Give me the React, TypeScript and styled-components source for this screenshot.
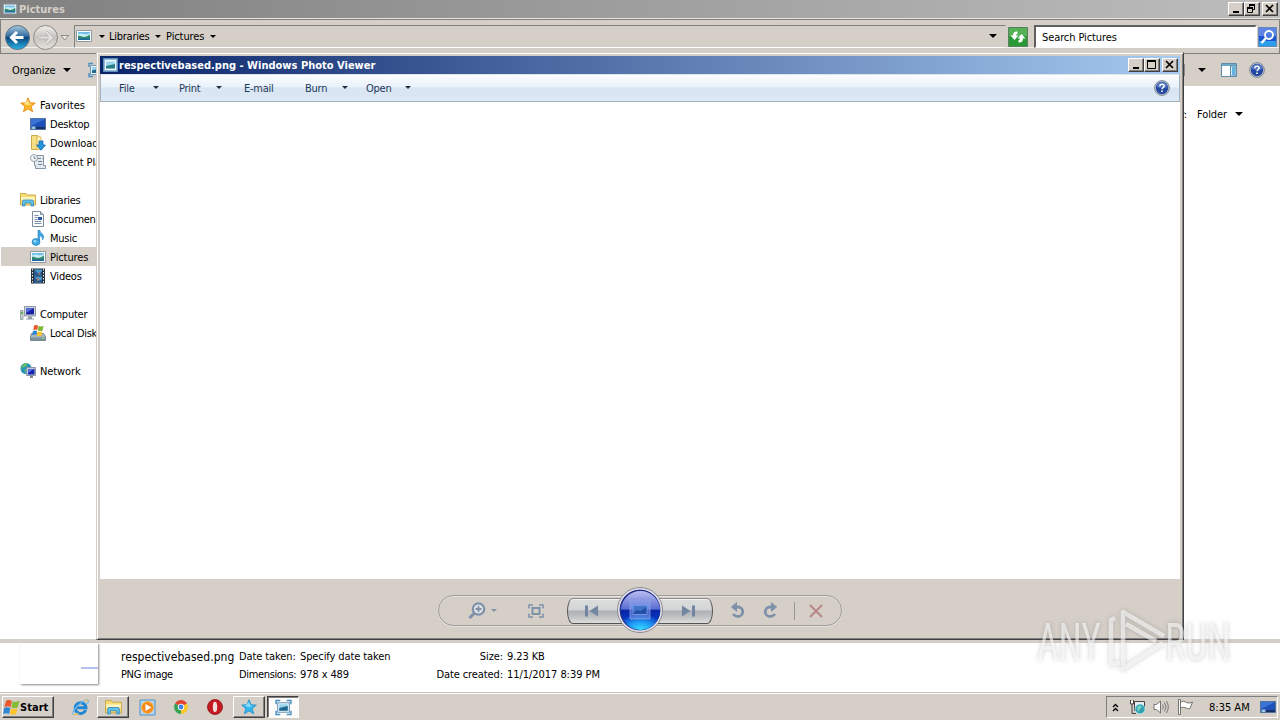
import React from "react";
import styled, { createGlobalStyle, css } from "styled-components";

const GlobalStyle = createGlobalStyle`
  * {
    box-sizing: border-box;
  }
  body {
    margin: 0;
    overflow: hidden;
    font-family: "DejaVu Sans Condensed", "DejaVu Sans", sans-serif;
    font-stretch: condensed;
    font-size: 11px;
    line-height: 14px;
    color: #000;
  }
  svg {
    display: block;
    flex: none;
  }
`;

const FACE = "#d5cfc8";

const Desktop = styled.div`
  position: relative;
  width: 1280px;
  height: 720px;
  display: flex;
  flex-direction: column;
  overflow: hidden;
  background: #fff;
`;

const Label = styled.span<{ $w?: number; $ls?: number; $bold?: boolean }>`
  display: block;
  flex: none;
  margin: 1px 0 -1px;
  white-space: pre;
  width: ${({ $w }) => ($w ? `${$w}px` : "auto")};
  letter-spacing: ${({ $ls = -0.1 }) => $ls}px;
  font-weight: ${({ $bold }) => ($bold ? 700 : 400)};
`;

const Arrow = styled.i<{ $c?: string; $s?: number }>`
  display: block;
  flex: none;
  width: 0;
  height: 0;
  border: ${({ $s = 4 }) => $s}px solid transparent;
  border-top-color: ${({ $c = "#000" }) => $c};
  border-bottom: 0;
`;

const Spacer = styled.div`
  flex: 1;
`;
const Gap = styled.div<{ $w: number }>`
  flex: none;
  width: ${({ $w }) => $w}px;
`;

/* ---- title bars ---- */
const TitleBar = styled.div<{ $active?: boolean }>`
  flex: none;
  display: flex;
  align-items: center;
  height: 18px;
  padding: 0 2px 0 3px;
  color: ${({ $active }) => ($active ? "#fff" : FACE)};
  background: ${({ $active }) =>
    $active
      ? "linear-gradient(90deg, #0a246a, #a6caf0)"
      : "linear-gradient(90deg, #808080, #bdbdbd)"};
`;
const Caption = styled.span`
  display: flex;
  align-items: center;
  justify-content: center;
  width: 16px;
  height: 14px;
  background: ${FACE};
  border: 1px solid;
  border-color: #fff #404040 #404040 #fff;
  box-shadow: inset -1px -1px #808080;
  &:last-child {
    margin-left: 2px;
  }
`;

/* ---- explorer ---- */
const NavBar = styled.div`
  flex: none;
  display: flex;
  align-items: center;
  height: 36px;
  padding: 1px 3px 0 4px;
  background: ${FACE};
  border-top: 1px solid #e8e5e0;
  border-bottom: 1px solid #808080;
  box-shadow: inset 1px 1px #808080, inset -1px 0 #808080, inset 0 -5px ${FACE}, inset 0 -6px #f3f1ee;
`;
const Address = styled.div`
  flex: none;
  display: flex;
  align-items: center;
  width: 932px;
  height: 23px;
  padding: 0 8px 1px 1px;
  border: 1px solid;
  border-color: #808080 ${FACE} #fff #808080;
`;
const Search = styled.div`
  flex: none;
  display: flex;
  align-items: center;
  width: 223px;
  height: 23px;
  padding-left: 6px;
  background: #fff;
  border: 2px solid;
  border-color: #606060 #fff #fff #606060;
  border-bottom-width: 1px;
`;
const CommandBar = styled.div`
  flex: none;
  display: flex;
  align-items: center;
  height: 32px;
  padding: 0 15px 0 12px;
  background: ${FACE};
`;
const ViewsEdge = styled.div`
  width: 4px;
  height: 12px;
  margin-right: 13px;
  background: #fff;
  border: 1px solid #8a8a90;
`;
const Body = styled.div`
  flex: 1;
  display: flex;
  justify-content: space-between;
  background: #fff;
`;
const Tree = styled.div`
  width: 200px;
  padding: 9px 0 0 1px;
`;
const TreeRow = styled.div<{ $level?: number; $selected?: boolean }>`
  display: flex;
  align-items: center;
  gap: 4px;
  height: 19px;
  padding-left: ${({ $level }) => ($level ? 29 : 19)}px;
  background: ${({ $selected }) => ($selected ? FACE : "transparent")};
`;
const Arrange = styled.div`
  display: flex;
  align-items: center;
  gap: 10px;
  height: 56px;
  padding-right: 37px;
`;
const Details = styled.div`
  flex: none;
  display: flex;
  height: 53px;
  padding: 0 0 0 20px;
  background: #fff;
  border-top: 4px solid ${FACE};
`;
const Thumb = styled.div`
  display: flex;
  justify-content: flex-end;
  width: 78px;
  height: 41px;
  margin-right: 1px;
  padding-top: 24px;
  background: #fff;
  box-shadow: 1px 1px 2px #888;
  &::after {
    content: "";
    width: 17px;
    height: 2px;
    background: #b4c2ec;
  }
`;
const Column = styled.div<{ $ml: number; $right?: boolean; $w?: number }>`
  margin-left: ${({ $ml }) => $ml}px;
  width: ${({ $w }) => ($w ? `${$w}px` : "auto")};
  padding-top: 4px;
  display: flex;
  flex-direction: column;
  align-items: ${({ $right }) => ($right ? "flex-end" : "flex-start")};
  line-height: 18px;
`;
const FileName = styled(Label)`
  font-size: 12px;
`;

/* ---- taskbar ---- */
const Taskbar = styled.div`
  flex: none;
  display: flex;
  align-items: center;
  height: 28px;
  padding: 1px 0 0 2px;
  background: ${FACE};
  border-top: 1px solid #c5c0ba;
  box-shadow: inset 0 1px #fff;
`;
const raised = css`
  border: 1px solid;
  border-color: #fff #404040 #404040 #fff;
  box-shadow: inset -1px -1px #808080;
`;
const Start = styled.div`
  display: flex;
  align-items: center;
  width: 52px;
  height: 22px;
  ${raised}
`;
const Task = styled.div<{ $state?: "open" | "active" }>`
  display: flex;
  align-items: center;
  justify-content: center;
  width: 32px;
  height: 22px;
  ${({ $state }) => $state === "open" && raised}
  ${({ $state }) =>
    $state === "active" &&
    css`
      background: #fdfcfb;
      border: 1px solid;
      border-color: #404040 #fff #fff #404040;
      box-shadow: inset 1px 1px #808080;
    `}
`;
const Tray = styled.div`
  display: flex;
  align-items: center;
  width: 172px;
  height: 22px;
  margin-right: 2px;
  padding-left: 5px;
  border: 1px solid;
  border-color: #808080 #fff #fff #808080;
`;

/* ---- photo viewer window ---- */
const Window = styled.div`
  position: absolute;
  left: 96px;
  top: 52px;
  width: 1088px;
  height: 588px;
  display: flex;
  flex-direction: column;
  padding: 3px 3px 0;
  background: ${FACE};
  border: 1px solid;
  border-color: ${FACE} #404040 #404040 ${FACE};
  box-shadow: inset 1px 1px #fff, inset -1px -1px #808080;
`;
const MenuBar = styled.div`
  flex: none;
  display: flex;
  align-items: center;
  height: 28px;
  padding: 0 9px 1px 18px;
  color: #1e395b;
  background: linear-gradient(#fcfdfe 0, #e9f1fa 45%, #d8e5f2 50%, #dce8f4 100%);
  border: 1px solid #a5b4c4;
  border-top-color: #dfe5ea;
`;
const Canvas = styled.div`
  flex: 1;
  background: #fff;
`;
const Controls = styled.div`
  flex: none;
  display: flex;
  align-items: center;
  justify-content: center;
  height: 60px;
  padding-top: 3px;
`;
const Capsule = styled.div`
  display: flex;
  align-items: center;
  width: 404px;
  height: 31px;
  border: 1px solid #a09e9c;
  border-radius: 16px;
  box-shadow: inset 0 1px #e6e3df, 0 1px #e6e3df;
`;
const Step = styled.div<{ $side: "left" | "right" }>`
  display: flex;
  align-items: center;
  justify-content: center;
  width: 55px;
  height: 26px;
  margin: ${({ $side }) => ($side === "left" ? "0 -5px 0 0" : "0 0 0 -5px")};
  padding: ${({ $side }) => ($side === "left" ? "0 6px 0 0" : "0 0 0 6px")};
  border: 1px solid #555;
  border-top-color: #8c8c8c;
  border-radius: ${({ $side }) =>
    $side === "left" ? "6px 0 0 6px / 13px 0 0 13px" : "0 6px 6px 0 / 0 13px 13px 0"};
  background: linear-gradient(#dcdddd 0, #d3d5d6 45%, #adb1b4 50%, #c0c2c3 75%, #dededd 100%);
  box-shadow: inset 0 1px #f0f0f0;
`;
const Play = styled.div`
  flex: none;
  z-index: 1;
  display: flex;
  align-items: center;
  justify-content: center;
  width: 46px;
  height: 46px;
  margin-bottom: 1px;
  border: 1px solid #8a8a94;
  border-radius: 50%;
  background: radial-gradient(circle, #23348c 0 20px, #e3dfea 20.8px);
`;
const Orb = styled.div`
  display: flex;
  align-items: center;
  justify-content: center;
  width: 39px;
  height: 39px;
  border-radius: 50%;
  background: radial-gradient(ellipse 24px 16px at 50% 100%, #39e1ff 0, #1f9df5 50%, transparent 100%),
    linear-gradient(#b9bdf0 0, #5a6ed2 46%, #0724a6 50%, #0a4ddc 100%);
`;
const Divider = styled.div`
  width: 1px;
  height: 18px;
  background: #96969a;
`;
const Watermark = styled.svg`
  position: absolute;
  left: 1030px;
  top: 600px;
  filter: drop-shadow(0 0 2px rgba(90, 90, 90, 0.5));
`;

/* ---- icons ---- */
const PictureIcon = ({ w = 16 }: { w?: number }) => (
  <svg width={w} height={w} viewBox="0 0 16 16">
    <path d="M.5 2.500h15v11H.5z" fill="#fff" stroke="#8b9aa3" />
    <path d="M2 4h12v8H2z" fill="#6fbfe8" />
    <path d="M2 6.500q3-1.500 6-.5t6-1V9H2z" fill="#c8ecf4" />
    <path d="M2 8c2-1 4 1 6 1s4-1 6-2.500V11H2z" fill="#2f8a66" />
    <path d="M2 10.500h12V12H2z" fill="#1c66a8" />
  </svg>
);

const ViewerIcon = ({ w = 16 }: { w?: number }) => (
  <svg width={w} height={w} viewBox="0 0 16 16">
    <path d="M2.500 3.500h11v9h-11z" fill="#eaf7fd" stroke="#6d98b8" />
    <path d="M4 5h8v6H4z" fill="#94d3ec" />
    <path d="M4 8.500q4-1 8-2V11H4z" fill="#22668c" />
    <path d="M1 5V1.500h4M11 1.500h4V5M15 11v3.500h-4M5 14.500H1V11" fill="none" stroke="#4a8fc0" strokeWidth="1.400" />
  </svg>
);

const ViewerTitleIcon = () => (
  <svg width="15" height="14" viewBox="0 0 15 14">
    <path d="M.5.5h14v13H.5z" fill="#8db8dc" stroke="#5e8fbd" />
    <path d="M2 2h11v10H2z" fill="#f2fafd" />
    <path d="M3 3.500h9v7H3z" fill="#9bd6ec" />
    <path d="M3 8q4-1 9-2v4.500H3z" fill="#2a7f86" />
  </svg>
);

const StarIcon = ({ blue, w = 16 }: { blue?: boolean; w?: number }) => (
  <svg width={w} height={w} viewBox="0 0 16 16">
    <path
      d="M8 .8l2.100 5 5.200.3-4.100 3.400 1.500 5.300L8 11.900l-4.600 2.900 1.400-5.300L.7 6.100l5.200-.3z"
      fill={blue ? "#35b7ee" : "#fbb829"}
      stroke={blue ? "#168dcc" : "#e08214"}
      strokeWidth=".8"
    />
    <path d="M8 3l1.300 3.600 2.700.3-4 1.100-4-1z" fill={blue ? "#8adcf8" : "#fee68a"} />
  </svg>
);

const MonitorIcon = ({ w = 16 }: { w?: number }) => (
  <svg width={w} height={w} viewBox="0 0 16 16">
    <path d="M.5 2.500h15v11H.5z" fill="#1d50b8" stroke="#54719c" />
    <path d="M1 3h14L1 10z" fill="#3a74d4" />
    <path d="M1 11h14v2H1z" fill="#173167" />
    <path d="M1.500 10.500h4v2.500h-4z" fill="#9cc6e8" />
  </svg>
);

const DownloadsIcon = () => (
  <svg width="16" height="16" viewBox="0 0 16 16">
    <path d="M1.500.5h6v14h-6z" fill="#f6de85" stroke="#d0aa45" />
    <path d="M7 1l4 1v12l-4 1z" fill="#fdf0b2" stroke="#d0aa45" strokeWidth=".7" />
    <path d="M9 6h4v4h2.500L11 15.300 6.500 10H9z" fill="#2695dc" stroke="#1464a8" strokeWidth=".8" />
  </svg>
);

const RecentIcon = () => (
  <svg width="16" height="16" viewBox="0 0 16 16">
    <path d="M4.500 1.500h9v10h2v3h-10v-3h-1z" fill="#e2eaf0" stroke="#8495a4" />
    <path d="M8 4.500h3M8 7.500h4M8 10.500h4M12.500 4.500h1" stroke="#6e8496" />
    <circle cx="4" cy="4" r="3.500" fill="#f4f7f9" stroke="#92a1ad" />
    <path d="M4 2v2.300h2" fill="none" stroke="#5e7484" strokeWidth=".8" />
  </svg>
);

const FolderIcon = ({ w = 16 }: { w?: number }) => (
  <svg width={w} height={w} viewBox="0 0 16 16">
    <path d="M.5 1.500H6l1 1.500h8.500v10H.5z" fill="#f5dc74" stroke="#c9a646" strokeWidth=".9" />
    <path d="M1 5h14v3H1z" fill="#fdf4bb" />
    <path d="M2.500 14V9.500q0-1.500 1.500-1.500h8q1.500 0 1.500 1.500V14H11v-3H5v3z" fill="#62c1ec" stroke="#3489bd" strokeWidth=".8" />
  </svg>
);

const DocumentIcon = () => (
  <svg width="16" height="16" viewBox="0 0 16 16">
    <path d="M2.500.5h8l3 3v12h-11z" fill="#fff" stroke="#7d8da0" />
    <path d="M10.500.5v3h3" fill="#cfdbe6" stroke="#7d8da0" />
    <path d="M4.500 4.500h4M4.500 6.500h3M4.500 8.500h3M4.500 10.500h7M4.500 12.500h7" stroke="#7a8fab" />
    <path d="M8 6h4v3H8z" fill="#2b5aa4" />
  </svg>
);

const MusicIcon = () => (
  <svg width="16" height="16" viewBox="0 0 16 16">
    <path d="M8 0h1.600c.3 3 4.600 3.500 4 7.500-.1 1.500-.9 2.300-1.300 2.500.6-2.600-.6-3.500-2.700-4.500V12H8z" fill="#3ba6e2" stroke="#1d76b8" strokeWidth=".5" />
    <ellipse cx="6" cy="12" rx="4" ry="3.400" fill="#41abe5" stroke="#1d76b8" strokeWidth=".6" />
    <ellipse cx="5" cy="11.200" rx="1.500" ry="1" fill="#b3e2f8" />
  </svg>
);

const VideoIcon = () => (
  <svg width="16" height="16" viewBox="0 0 16 16">
    <path d="M1 .5h14v15H1z" fill="#26323c" />
    <path d="M4 1.500h8v6H4zM4 8.500h8v6H4z" fill="#4a9bd0" />
    <path d="M4 1.500l4 4 4-2v4H4zM4 8.500l4 4 4-1v3H4z" fill="#265894" />
    <path d="M8 4l3 2-2 1zM7 10l3 2-3 1z" fill="#c07855" />
    <path d="M2.500 1v14M13.500 1v14" stroke="#e8eef2" strokeDasharray="1.500 1.500" />
  </svg>
);

const ComputerIcon = () => (
  <svg width="16" height="16" viewBox="0 0 16 16">
    <path d="M.5 4.500h2.500v9H.5z" fill="#cbd5d2" stroke="#819390" strokeWidth=".8" />
    <path d="M1 6h2v2H1z" fill="#69ae4b" />
    <path d="M4.500.5h11v9.500h-11z" fill="#cfd4da" stroke="#8d98a4" />
    <path d="M6 2h8v6.500H6z" fill="#1a22a6" />
    <path d="M6 2h8L6 7z" fill="#5468dc" />
    <path d="M8 10.500h4v2H8zM6 12.500h8v1H6z" fill="#8f9ba6" />
  </svg>
);

const Flag = ({ w = 16 }: { w?: number }) => (
  <svg width={w} height={w} viewBox="0 0 16 16">
    <path d="M3 1.500q2.800-1.300 5.300.3L7.200 7.500q-2.800-1.500-6 .2z" fill="#e8562a" />
    <path d="M9 2.200q2.800 1.400 6.500-.5l-1.500 6q-3 1.500-6 .2z" fill="#86bc37" />
    <path d="M1 8.500q2.900-1.500 5.900 0l-1.200 5.500q-2.800-1.500-5.500.2z" fill="#2e86d4" />
    <path d="M7.600 8.800q3 1.400 6.200-.2l-1.500 5.500q-3 1.400-5.900.1z" fill="#fbc42c" />
  </svg>
);

const DiskIcon = () => (
  <svg width="16" height="16" viewBox="0 0 16 16">
    <path d="M1.500 8.500h12l2 3v4H.5v-4z" fill="#a9b5ba" stroke="#66767d" strokeWidth=".8" />
    <path d="M1 12.500h14v2.500H1z" fill="#7b9199" />
    <path d="M12 13h2v1h-2z" fill="#6bf268" />
    <path d="M4 .5q2-1 4 0L7.300 5q-2-1-4 .2z" fill="#e8562a" />
    <path d="M8.500 1q2 1 5-.2l-.9 4.600q-2 1-4.800.1z" fill="#7bb932" />
    <path d="M3 6q2-1.200 4 0l-.7 4q-2-1-4.500.2z" fill="#2e86d4" />
    <path d="M7.600 6.200q2 1 4.800 0l-.9 4.400q-2 1-4.700 0z" fill="#fbc42c" />
  </svg>
);

const NetworkIcon = () => (
  <svg width="16" height="16" viewBox="0 0 16 16">
    <circle cx="6" cy="5.500" r="5.500" fill="#2492b8" />
    <path d="M2 2.500q3-3 6-2L6 3.500 3 4.500 1 7.500zM4 6.500l3 1-1 3z" fill="#64be6a" />
    <path d="M6.500 4.500h9v8h-9z" fill="#bfcad8" stroke="#8594a8" />
    <path d="M8 6h6.500v5.500H8z" fill="#1724ad" />
    <path d="M8 6h6l-6 4z" fill="#566fe0" />
    <path d="M10 13h3v2h-3z" fill="#7b8794" />
  </svg>
);

const HelpIcon = () => (
  <svg width="16" height="16" viewBox="0 0 16 16">
    <circle cx="8" cy="8" r="7.400" fill="#c3cbda" stroke="#7e8694" />
    <circle cx="8" cy="8" r="6.200" fill="#24479f" />
    <path d="M2.300 7a5.800 5.800 0 0 1 11.400 0q-5 2-11.400 0z" fill="#5577c4" />
    <path d="M5.900 6.300q0-2 2.100-2t2.100 1.800q0 1-1.200 1.700-.9.500-.9 1.500" fill="none" stroke="#fff" strokeWidth="1.500" />
    <path d="M7.200 10.600h1.600v1.500H7.200z" fill="#fff" />
  </svg>
);

const NavArrows = () => (
  <svg width="66" height="28" viewBox="0 0 66 28">
    <defs>
      <linearGradient id="back" x1="0" y1="0" x2="0" y2="1">
        <stop offset="0" stopColor="#aac8dc" />
        <stop offset=".45" stopColor="#2f6da0" />
        <stop offset=".5" stopColor="#0a457c" />
        <stop offset="1" stopColor="#2bb6ea" />
      </linearGradient>
      <linearGradient id="fwd" x1="0" y1="0" x2="0" y2="1">
        <stop offset="0" stopColor="#f0efed" />
        <stop offset=".5" stopColor="#c6c3bf" />
        <stop offset="1" stopColor="#e6e3df" />
      </linearGradient>
    </defs>
    <circle cx="13.500" cy="14.500" r="12" fill="url(#back)" stroke="#5c7486" />
    <path d="M7.500 14.500h12M13 9l-5.500 5.500L13 20" fill="none" stroke="#fff" strokeWidth="3" />
    <circle cx="41.500" cy="14.500" r="12" fill="url(#fwd)" stroke="#8d8a87" />
    <path d="M35 14.500h13M42 9l6 5.500-6 5.500" fill="none" stroke="#b3b0ad" strokeWidth="3.500" />
    <path d="M35 14.500h13M42 9l6 5.500-6 5.500" fill="none" stroke="#e4e2df" strokeWidth="2" />
    <path d="M57 12.500h7.500L60.700 17z" fill="#ece9e5" stroke="#777" strokeWidth=".8" />
  </svg>
);

const RefreshIcon = () => (
  <svg width="20" height="20" viewBox="0 0 20 20">
    <path d="M.5.5h19v19H.5z" fill="#2a9a36" stroke="#5b8060" />
    <path d="M1 1h18v8H1z" fill="#55b155" />
    <path d="M9.500 4.500q-4.500-.5-4.500 4H2.500L6.500 13l4-4.500H8q0-1.800 1.500-1.800z" fill="#fff" />
    <path d="M10.500 15.500q4.500.5 4.500-4h2.500L13.500 7l-4 4.500H12q0 1.800-1.500 1.800z" fill="#fff" />
  </svg>
);

const SearchIcon = () => (
  <svg width="19" height="20" viewBox="0 0 19 20">
    <path d="M.5.5h18v19H.5z" fill="#1c55cf" stroke="#6886b8" />
    <path d="M1 1h17v8H1z" fill="#5f84e2" />
    <path d="M1 14h17v5H1z" fill="#2d9eea" />
    <circle cx="11" cy="8" r="4" fill="#4c7de0" stroke="#fff" strokeWidth="1.800" />
    <path d="M8 11l-4.500 5" stroke="#fff" strokeWidth="2.500" />
  </svg>
);

const PaneIcon = () => (
  <svg width="16" height="14" viewBox="0 0 16 14">
    <path d="M.5.5h15v13H.5z" fill="#fff" stroke="#5a8ca6" />
    <path d="M1 1h14v2H1z" fill="#6fa9c6" />
    <path d="M9.500 3h5.500v10h-5.500z" fill="#d8eef8" stroke="#5a8ca6" />
    <path d="M11 4h3v8h-3z" fill="#5fb2e2" />
  </svg>
);

const MinGlyph = () => (
  <svg width="12" height="10" viewBox="0 0 12 10">
    <path d="M3 7h6v2H3z" />
  </svg>
);
const MaxGlyph = () => (
  <svg width="12" height="10" viewBox="0 0 12 10">
    <path d="M1.500 1v7.500h8V1z" fill="none" stroke="#000" />
    <path d="M1 0h9v2H1z" />
  </svg>
);
const RestoreGlyph = () => (
  <svg width="12" height="10" viewBox="0 0 12 10">
    <path d="M3 0h6v2H3zM1 3h6v2H1z" />
    <path d="M3.500 1v2M8.500 1v4.500H7M1.500 4v4.500h5V4" fill="none" stroke="#000" />
  </svg>
);
const CloseGlyph = () => (
  <svg width="12" height="10" viewBox="0 0 12 10">
    <path d="M2 1l7 7M9 1L2 8" stroke="#000" strokeWidth="1.700" />
  </svg>
);

const INK = "#7e91a9";

const ZoomGlyph = () => (
  <svg width="18" height="18" viewBox="0 0 18 18">
    <circle cx="10.500" cy="7" r="5.700" fill="#dfe2e4" stroke={INK} strokeWidth="2.200" />
    <path d="M6.500 11L1.500 16" stroke={INK} strokeWidth="3" />
    <path d="M7.500 7h6M10.500 4v6" stroke={INK} strokeWidth="1.800" />
  </svg>
);
const FitGlyph = () => (
  <svg width="16" height="14" viewBox="0 0 16 14">
    <path d="M4.500 4h7v6h-7z" fill="none" stroke={INK} strokeWidth="2" />
    <path d="M1 4.500V1h4M11 1h4v3.500M15 9.500V13h-4M5 13H1V9.500" fill="none" stroke={INK} strokeWidth="1.500" />
  </svg>
);
const StepGlyph = ({ next }: { next?: boolean }) => (
  <svg width="15" height="12" viewBox="0 0 15 12">
    <path
      d={next ? "M1 .5L9.500 6 1 11.500zM11 .5h3v11h-3z" : "M14 .5L5.500 6l8.500 5.500zM1 .5h3v11H1z"}
      fill="#7286a2"
    />
  </svg>
);
const TurnGlyph = ({ right }: { right?: boolean }) => (
  <svg width="15" height="17" viewBox="0 0 15 17">
    <g transform={right ? "matrix(-1 0 0 1 15 0)" : undefined}>
      <path d="M6 5h2a4.700 4.700 0 0 1 0 9.500q-3 0-5-2.500" fill="none" stroke={INK} strokeWidth="2.800" />
      <path d="M.8 5L7 0v10z" fill={INK} />
    </g>
  </svg>
);
const DeleteGlyph = () => (
  <svg width="14" height="14" viewBox="0 0 14 14">
    <path d="M1 1l12 12M13 1L1 13" stroke="#bc8a8c" strokeWidth="2.200" />
  </svg>
);
const SlideGlyph = () => (
  <svg width="22" height="20" viewBox="0 0 22 20">
    <path d="M1 1h20v18H1z" fill="#7f9fe8" fillOpacity=".55" stroke="#8fa5e8" strokeOpacity=".7" />
    <path d="M4 5.500h14v9H4z" fill="#3f73cc" stroke="#6f95e4" />
    <path d="M4.500 12l4-2 3 1 6-4v7h-13z" fill="#2450a8" />
  </svg>
);

const IeIcon = () => (
  <svg width="17" height="17" viewBox="0 0 17 17">
    <path d="M13.700 11A5.400 5.400 0 1 1 14 8.800H5" fill="none" stroke="#1f86d6" strokeWidth="3" />
    <path d="M1.500 15.500Q-.5 13 5 7.500 13-.5 16 1.200q1 .8-.8 3.800" fill="none" stroke="#6fb8e8" strokeWidth="1.300" />
    <path d="M1.500 15.500q2 .8 5-1.500M12 1.500q3-1 4 .3" fill="none" stroke="#e8c04c" strokeWidth="1.100" />
  </svg>
);
const MediaIcon = () => (
  <svg width="17" height="17" viewBox="0 0 17 17">
    <path d="M1 1h15v15H1z" fill="#b4d6ee" stroke="#4a92c8" />
    <circle cx="8.500" cy="8.500" r="6" fill="#f28a1c" stroke="#fbb658" />
    <path d="M6.500 5l6 3.500-6 3.500z" fill="#fff" />
  </svg>
);
const ChromeIcon = () => (
  <svg width="14" height="14" viewBox="0 0 14 14">
    <path d="M7 7L1 3.500A7 7 0 0 1 13 3.500z" fill="#e0432f" />
    <path d="M7 7L1 3.500A7 7 0 0 0 7 14l3-5.200z" fill="#35a352" />
    <path d="M7 7l6-3.500A7 7 0 0 1 7 14z" fill="#f9c929" />
    <circle cx="7" cy="7" r="3.200" fill="#fff" />
    <circle cx="7" cy="7" r="2.400" fill="#4383e6" />
  </svg>
);
const OperaIcon = () => (
  <svg width="16" height="16" viewBox="0 0 16 16">
    <circle cx="8" cy="8" r="7.500" fill="#c51a22" stroke="#8e1016" strokeWidth=".8" />
    <ellipse cx="8" cy="8" rx="2.200" ry="5.200" fill="#f0dcda" />
  </svg>
);

const TrayNetwork = () => (
  <svg width="17" height="16" viewBox="0 0 17 16">
    <path d="M5.500 2.500h10v9h-10z" fill="#e9ecec" stroke="#444" />
    <path d="M1.500 1v4h3V1M3 5v9.500h4" fill="none" stroke="#444" />
    <path d="M2 2h2v2H2z" fill="#fff" />
    <circle cx="11" cy="10" r="5" fill="#33a3b4" stroke="#dff" strokeWidth=".6" />
    <path d="M8 8q3-3 5 0l-2 2-2 3z" fill="#7ad1c6" />
  </svg>
);
const TraySpeaker = () => (
  <svg width="16" height="16" viewBox="0 0 16 16">
    <path d="M1 5.500h2.500L7.500 2v12l-4-3.500H1z" fill="#fff" stroke="#666" strokeWidth=".9" />
    <path d="M9.500 5.500q1.600 2.500 0 5M11.500 3.500q3 4.500 0 9M13.500 2q3.600 6 0 12" fill="none" stroke="#6e6e6e" strokeWidth=".9" />
  </svg>
);
const TrayFlag = () => (
  <svg width="17" height="16" viewBox="0 0 17 16">
    <path d="M1.500.5h2v15h-2z" fill="#fff" stroke="#666" strokeWidth=".9" />
    <path d="M3.500 3q3-2 6 .5 2 1.500 6-.5l-2.500 6.500q-2.500 1-4-.5-2.500-1.500-5.500 0z" fill="#fff" stroke="#666" strokeWidth=".9" />
  </svg>
);
const Chevrons = () => (
  <svg width="7" height="9" viewBox="0 0 7 9">
    <path d="M1 4l2.500-2.500L6 4M1 8l2.500-2.500L6 8" fill="none" stroke="#000" strokeWidth="1.300" />
  </svg>
);

interface TreeItem {
  text: string;
  icon: React.ReactNode;
  level?: number;
  selected?: boolean;
  ls?: number;
}

const tree: (TreeItem | null)[] = [
  { text: "Favorites", icon: <StarIcon />, ls: 0.05 },
  { text: "Desktop", icon: <MonitorIcon />, level: 1, ls: -0.2 },
  { text: "Downloads", icon: <DownloadsIcon />, level: 1 },
  { text: "Recent Places", icon: <RecentIcon />, level: 1 },
  null,
  { text: "Libraries", icon: <FolderIcon />, ls: -0.25 },
  { text: "Documents", icon: <DocumentIcon />, level: 1, ls: -0.25 },
  { text: "Music", icon: <MusicIcon />, level: 1, ls: -0.25 },
  { text: "Pictures", icon: <PictureIcon />, level: 1, selected: true },
  { text: "Videos", icon: <VideoIcon />, level: 1, ls: -0.2 },
  null,
  { text: "Computer", icon: <ComputerIcon />, ls: -0.25 },
  { text: "Local Disk (C:)", icon: <DiskIcon />, level: 1, ls: -0.3 },
  null,
  { text: "Network", icon: <NetworkIcon /> },
];

const menu = [
  { text: "File", w: 34, after: 20, arrow: true },
  { text: "Print", w: 37, after: 22, arrow: true },
  { text: "E-mail", w: 61, after: 0, arrow: false },
  { text: "Burn", w: 37, after: 18, arrow: true },
  { text: "Open", w: 39, after: 0, arrow: true },
];

const Explorer = () => (
  <>
    <TitleBar>
      <PictureIcon w={14} />
      <Gap $w={2} />
      <Label $bold $ls={0}>Pictures</Label>
      <Spacer />
      <Caption><MinGlyph /></Caption>
      <Caption><RestoreGlyph /></Caption>
      <Caption><CloseGlyph /></Caption>
    </TitleBar>
    <NavBar>
      <NavArrows />
      <Gap $w={4} />
      <Address>
        <PictureIcon />
        <Gap $w={7} />
        <Arrow $s={3} />
        <Gap $w={4} />
        <Label $w={46} $ls={-0.25}>Libraries</Label>
        <Arrow $s={3} />
        <Gap $w={5} />
        <Label $w={44}>Pictures</Label>
        <Arrow $s={3} />
        <Spacer />
        <Arrow />
      </Address>
      <Gap $w={2} />
      <RefreshIcon />
      <Gap $w={6} />
      <Search>
        <Label>Search Pictures</Label>
      </Search>
      <Gap $w={1} />
      <SearchIcon />
    </NavBar>
    <CommandBar>
      <Label $w={51}>Organize</Label>
      <Arrow />
      <Gap $w={17} />
      <ViewerIcon />
      <Spacer />
      <ViewsEdge />
      <Arrow />
      <Gap $w={15} />
      <PaneIcon />
      <Gap $w={12} />
      <HelpIcon />
    </CommandBar>
    <Body>
      <Tree>
        {tree.map((item, i) => (
          <TreeRow key={i} $level={item?.level} $selected={item?.selected}>
            {item?.icon}
            {item && <Label $ls={item.ls}>{item.text}</Label>}
          </TreeRow>
        ))}
      </Tree>
      <Arrange>
        <Label>Arrange by:</Label>
        <Label $w={28}>Folder</Label>
        <Arrow />
      </Arrange>
    </Body>
    <Details>
      <Thumb />
      <Column $ml={22} $w={118}>
        <FileName $ls={0.03}>respectivebased.png</FileName>
        <Label $ls={-0.35}>PNG image</Label>
      </Column>
      <Column $ml={0} $w={61}>
        <Label $ls={-0.1}>Date taken:</Label>
        <Label $ls={-0.35}>Dimensions:</Label>
      </Column>
      <Column $ml={0} $w={110}>
        <Label>Specify date taken</Label>
        <Label>978 x 489</Label>
      </Column>
      <Column $ml={0} $w={93} $right>
        <Label>Size:</Label>
        <Label>Date created:</Label>
      </Column>
      <Column $ml={4}>
        <Label>9.23 KB</Label>
        <Label $ls={-0.05}>11/1/2017 8:39 PM</Label>
      </Column>
    </Details>
    <Taskbar>
      <Start>
        <Flag w={17} />
        <Label $bold $ls={0.05}>Start</Label>
      </Start>
      <Gap $w={10} />
      <Task><IeIcon /></Task>
      <Gap $w={1} />
      <Task $state="open"><FolderIcon w={17} /></Task>
      <Gap $w={2} />
      <Task><MediaIcon /></Task>
      <Gap $w={2} />
      <Task><ChromeIcon /></Task>
      <Gap $w={2} />
      <Task><OperaIcon /></Task>
      <Gap $w={2} />
      <Task $state="open"><StarIcon blue /></Task>
      <Gap $w={2} />
      <Task $state="active"><ViewerIcon w={17} /></Task>
      <Spacer />
      <Tray>
        <Chevrons />
        <Gap $w={10} />
        <TrayNetwork />
        <Gap $w={7} />
        <TraySpeaker />
        <Gap $w={8} />
        <TrayFlag />
        <Gap $w={15} />
        <Label $w={51} $ls={0}>8:35 AM</Label>
        <MonitorIcon />
      </Tray>
    </Taskbar>
  </>
);

const PhotoViewer = () => (
  <Window>
    <TitleBar $active>
      <ViewerTitleIcon />
      <Gap $w={1} />
      <Label $bold $ls={0.01}>respectivebased.png - Windows Photo Viewer</Label>
      <Spacer />
      <Caption><MinGlyph /></Caption>
      <Caption><MaxGlyph /></Caption>
      <Caption><CloseGlyph /></Caption>
    </TitleBar>
    <MenuBar>
      {menu.map(({ text, w, after, arrow }) => (
        <React.Fragment key={text}>
          <Label $w={w} $ls={-0.25}>{text}</Label>
          {arrow && <Arrow $s={3} $c="#1e2f45" />}
          <Gap $w={after} />
        </React.Fragment>
      ))}
      <Spacer />
      <HelpIcon />
    </MenuBar>
    <Canvas />
    <Controls>
      <Capsule>
        <Gap $w={29} />
        <ZoomGlyph />
        <Gap $w={5} />
        <Arrow $s={3} $c={INK} />
        <Gap $w={31} />
        <FitGlyph />
        <Gap $w={23} />
        <Step $side="left"><StepGlyph /></Step>
        <Play>
          <Orb><SlideGlyph /></Orb>
        </Play>
        <Step $side="right"><StepGlyph next /></Step>
        <Gap $w={17} />
        <TurnGlyph />
        <Gap $w={18} />
        <TurnGlyph right />
        <Gap $w={16} />
        <Divider />
        <Gap $w={14} />
        <DeleteGlyph />
      </Capsule>
    </Controls>
  </Window>
);

const App: React.FC = () => {
  return (
    <Desktop>
      <GlobalStyle />
      <Explorer />
      <PhotoViewer />
      <Watermark width="220" height="90" viewBox="0 0 220 90">
        <g fill="#fff" fillOpacity=".6" fontFamily="Roboto, sans-serif" fontSize="51" fontWeight="400">
          <text transform="translate(7 60) scale(.735 1)">ANY</text>
          <text transform="translate(135 60) scale(.755 1)">RUN</text>
        </g>
        <path
          d="M85 18l-4 2v46M93 66V12l41 24M96 24l30 17M91 70l42-27M81 64l9-1"
          fill="none"
          stroke="#fff"
          strokeOpacity=".6"
          strokeWidth="4.500"
          strokeLinejoin="round"
        />
      </Watermark>
    </Desktop>
  );
};

export default App;
